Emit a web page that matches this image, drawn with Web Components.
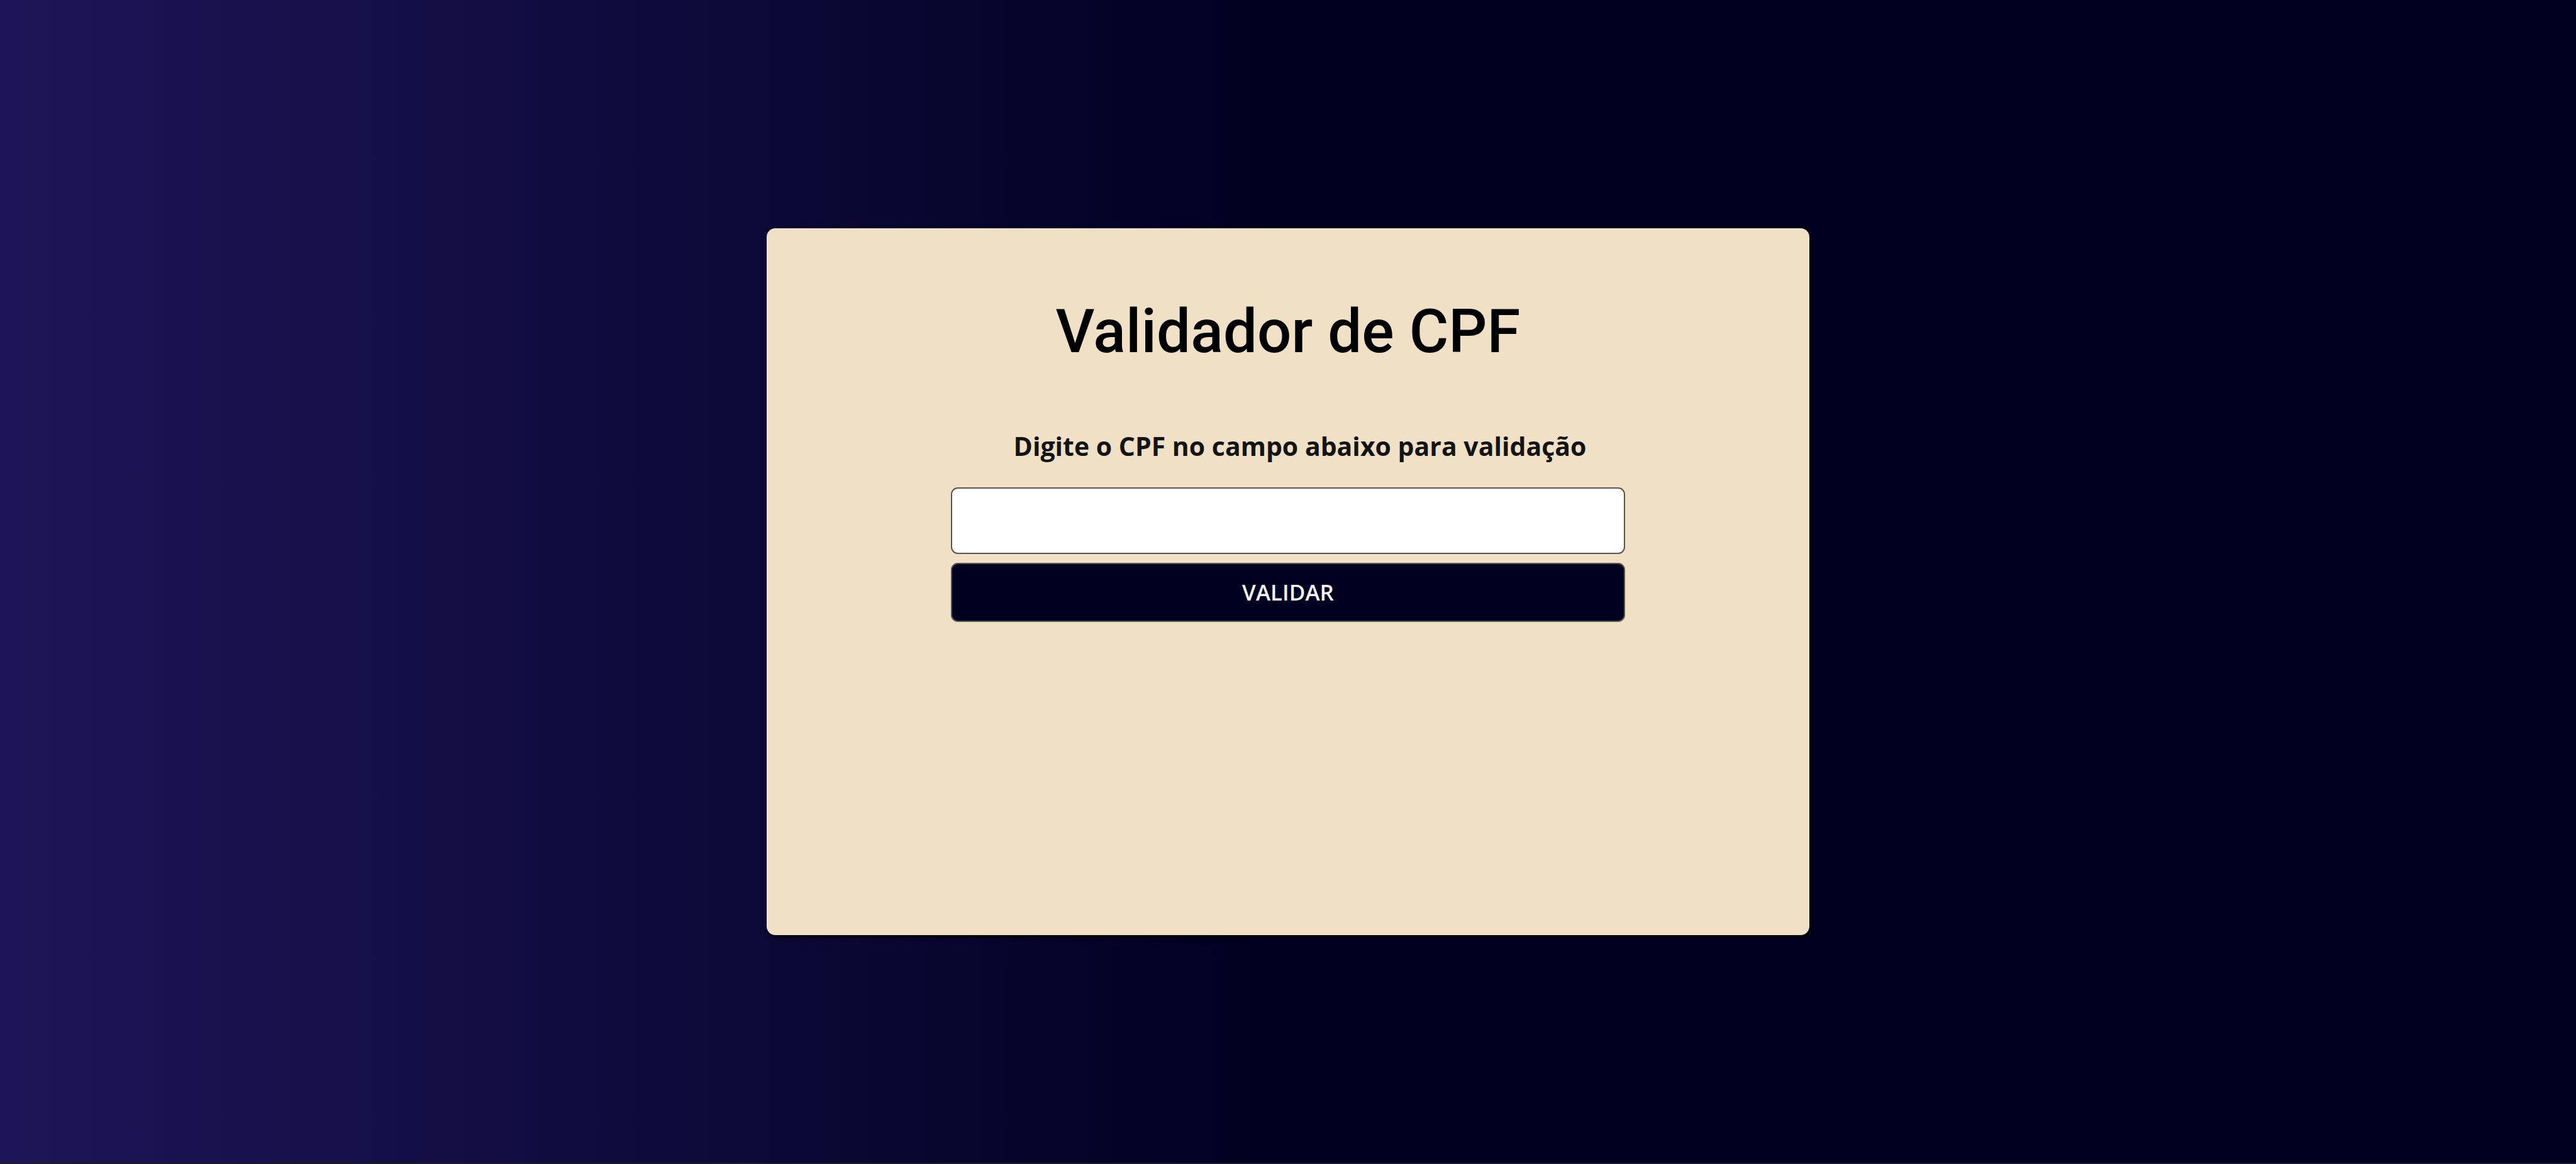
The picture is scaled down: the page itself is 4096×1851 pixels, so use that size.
<!DOCTYPE html>
<html lang="pt-BR">
<head>
<meta charset="utf-8">
<title>Validador de CPF</title>
<style>
html { height: 100%; }
body { margin: 0; min-height: 100%; display: flex; }
</style>
</head>
<body>
<cpf-page>
  <cpf-card>
    <span slot="title">Validador de CPF</span>
    <cpf-form label="Digite o CPF no campo abaixo para validação" action="VALIDAR"></cpf-form>
  </cpf-card>
</cpf-page>
<script>
class CpfPage extends HTMLElement {
  constructor() {
    super();
    this.attachShadow({ mode: 'open' }).innerHTML = `
      <style>
        :host { flex: 1; min-height: 100vh; box-sizing: border-box; display: flex;
          align-items: center; justify-content: center;
          background: linear-gradient(to right, #1e1558, #000020 50%);
          border-bottom: 2px solid #1c1b22; }
        main { display: contents; }
      </style>
      <main><slot></slot></main>`;
  }
}
class CpfCard extends HTMLElement {
  constructor() {
    super();
    this.attachShadow({ mode: 'open' }).innerHTML = `
      <style>
        :host { display: flex; flex-direction: column; align-items: center; gap: 98px;
          box-sizing: border-box; width: 40.5%; min-height: 1124px; padding: 108px 30px 30px;
          background: #efe0c6; border-radius: 14px; box-shadow: 3px 3px 6px #000; }
        h1 { margin: 0; font: 500 96px/112px Roboto, sans-serif; color: #000; }
      </style>
      <h1><slot name="title"></slot></h1>
      <slot></slot>`;
  }
}
class CpfForm extends HTMLElement {
  connectedCallback() {
    this.attachShadow({ mode: 'open' }).innerHTML = `
      <style>
        :host { display: block; width: 67%; font-family: "Open Sans", "Noto Sans", sans-serif; }
        form { display: flex; flex-direction: column; gap: 14px; }
        label { font-size: 41px; line-height: 56px; font-weight: 700; color: #141414;
          text-align: center; padding-left: 38px; margin-bottom: 24px; white-space: nowrap; }
        input, button { box-sizing: border-box; width: 100%; margin: 0; padding: 0 24px;
          border: 2px solid #5a5450; border-radius: 11px; font-family: inherit; font-size: 35px; }
        input { height: 106px; background: #fff; }
        button { height: 94px; background: #000020; color: #f3f4fb; font-weight: 600; }
      </style>
      <form>
        <label for="cpf">${this.getAttribute('label')}</label>
        <input id="cpf" type="text" name="cpf">
        <button type="button">${this.getAttribute('action')}</button>
      </form>`;
  }
}
customElements.define('cpf-page', CpfPage);
customElements.define('cpf-card', CpfCard);
customElements.define('cpf-form', CpfForm);
</script>
</body>
</html>
